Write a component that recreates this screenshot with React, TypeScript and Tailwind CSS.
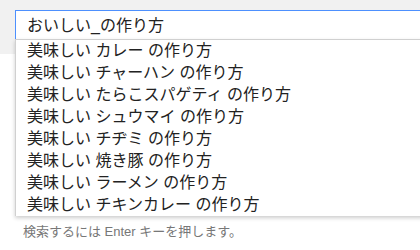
const suggestions = [
  '美味しい カレー の作り方',
  '美味しい チャーハン の作り方',
  '美味しい たらこスパゲティ の作り方',
  '美味しい シュウマイ の作り方',
  '美味しい チヂミ の作り方',
  '美味しい 焼き豚 の作り方',
  '美味しい ラーメン の作り方',
  '美味しい チキンカレー の作り方',
]

export default function App() {
  return (
    <div className="w-[420px] h-[250px] overflow-hidden bg-[linear-gradient(#f1f1f1_54px,#ffffff_54px)] pt-[10px] pl-[15px] font-['Liberation_Sans','Noto_Sans_CJK_JP',sans-serif]">
      <div className="w-[420px]">
        <div className="h-[29px] border-t border-l border-[#4d90fe] bg-white pl-[11px] pt-[2px] flex items-center text-[16px] text-[#222]">
          おいしい_の作り方
        </div>
        <ul className="border-t border-l border-[#d0d0d0] bg-white shadow-[0_2px_4px_rgba(0,0,0,0.2)]">
          {suggestions.map((s) => (
            <li key={s} className="h-[22px] leading-[22px] pl-[11px] text-[16px] text-[#222] whitespace-nowrap">
              {s}
            </li>
          ))}
        </ul>
      </div>
      <p className="mt-[7px] pl-[8px] text-[13px] leading-[18px] text-[#777]">
        検索するには Enter キーを押します。
      </p>
    </div>
  )
}
